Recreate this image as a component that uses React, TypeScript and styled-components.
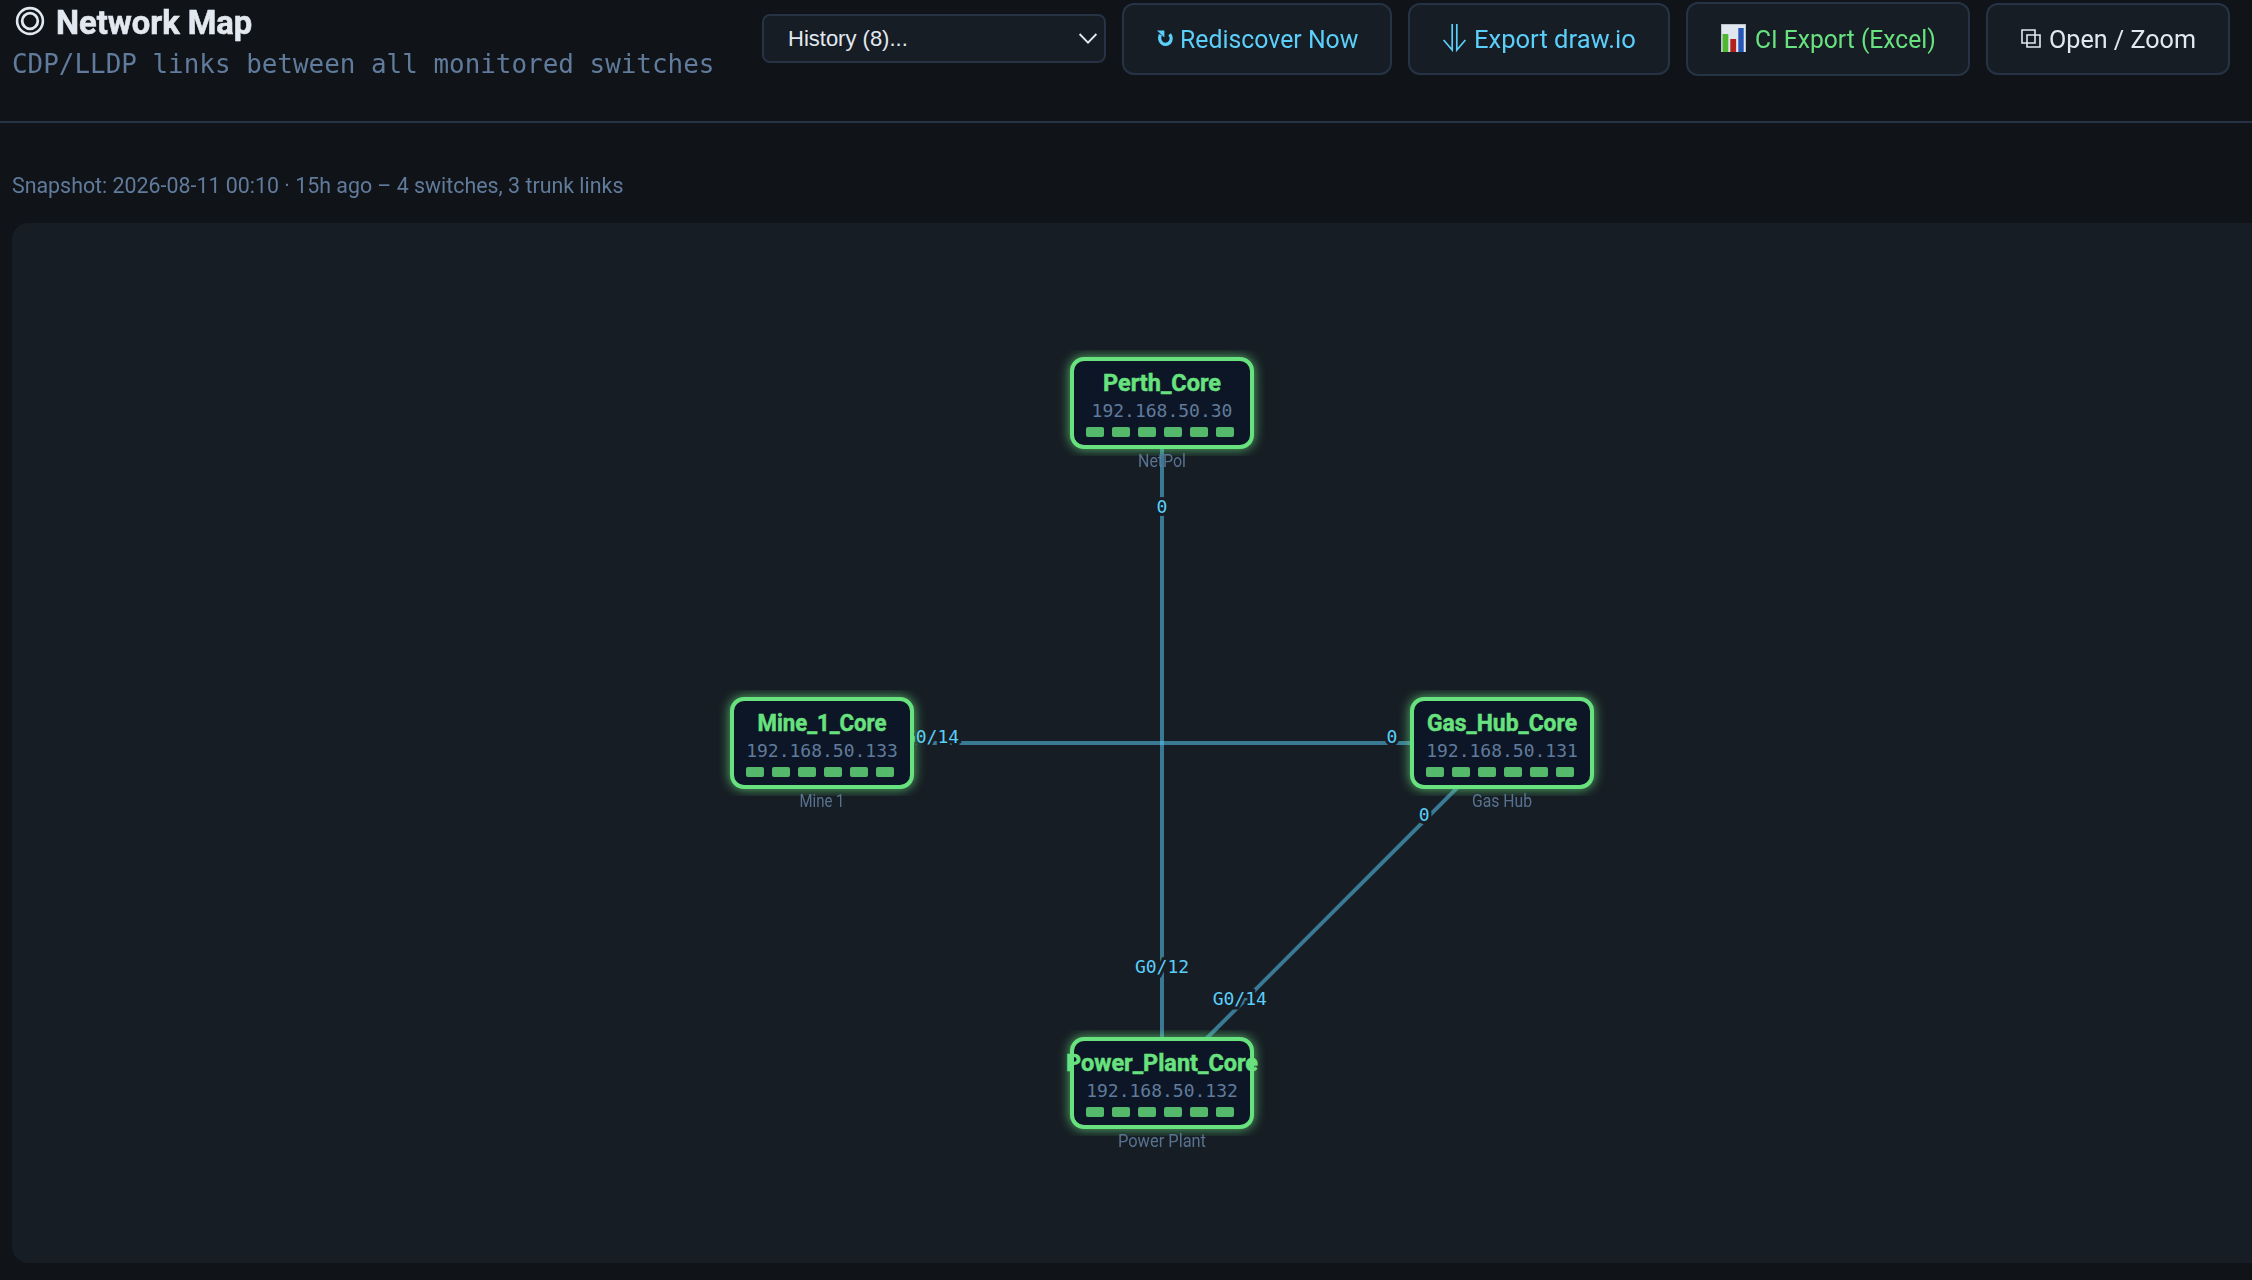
import React, { useLayoutEffect, useRef, useState } from "react";
import styled, { createGlobalStyle } from "styled-components";

const color = {
  bg: "#101318",
  panel: "#161d24",
  border: "#253345",
  text: "#e2e8f0",
  muted: "#607b9b",
  cyan: "#5bcefa",
  green: "#68e27e",
  node: "#0c1525",
};

const GlobalStyle = createGlobalStyle`
  * { box-sizing: border-box; }
  html, body { margin: 0; background: ${color.bg}; overflow: hidden; }
  body { font-family: Roboto, "Liberation Sans", sans-serif; color: ${color.text}; }
`;

const Page = styled.div`
  width: 2252px;
  height: 1280px;
  overflow: hidden;
  display: flex;
  flex-direction: column;
  background: ${color.bg};
`;

const Header = styled.header`
  display: flex;
  justify-content: space-between;
  align-items: flex-start;
  height: 123px;
  flex: none;
  padding: 0 22px 0 12px;
  border-bottom: 2px solid ${color.border};
`;

const Heading = styled.div`
  display: flex;
  flex-direction: column;
`;

const Title = styled.h1`
  margin: 0;
  height: 45px;
  display: flex;
  align-items: center;
  gap: 11px;
  padding-left: 3px;
  font-size: 33px;
  line-height: 43px;
  font-weight: 700;
  -webkit-text-stroke: 0.6px currentColor;
`;

const Subtitle = styled.div`
  height: 38px;
  line-height: 39px;
  font-family: "DejaVu Sans Mono", "Liberation Mono", monospace;
  font-size: 26px;
  color: ${color.muted};
`;

const Toolbar = styled.div`
  display: flex;
  align-items: center;
  gap: 16px;
  height: 78px;
`;

const Select = styled.button`
  width: 344px;
  height: 49px;
  display: flex;
  align-items: center;
  justify-content: space-between;
  margin-bottom: 1px;
  padding: 0 7px 0 24px;
  border: 2px solid ${color.border};
  border-radius: 8px;
  background: ${color.panel};
  color: ${color.text};
  font-family: "Liberation Sans", Arial, sans-serif;
  font-size: 22px;
`;

const Button = styled.button<{ $tone: string; $w: number; $tall?: boolean; $gap?: number }>`
  width: ${(p) => p.$w}px;
  height: ${(p) => (p.$tall ? 74 : 72)}px;
  display: flex;
  align-items: center;
  justify-content: center;
  gap: ${(p) => p.$gap ?? 9}px;
  padding: 0 0 2px;
  border: 2px solid ${color.border};
  border-radius: 12px;
  background: ${color.panel};
  color: ${(p) => p.$tone};
  font-family: Roboto, "Liberation Sans", sans-serif;
  font-size: 26.5px;
  font-weight: 400;
`;

const Icon = styled.svg`
  display: block;
  flex: none;
  overflow: visible;
`;

const RingIcon = styled(Icon)`
  margin-top: -4px;
`;

const Snapshot = styled.div`
  height: 100px;
  flex: none;
  padding: 48px 0 0 12px;
  line-height: 30px;
  font-size: 22px;
  font-weight: 400;
  color: ${color.muted};
`;

const Panel = styled.main`
  flex: none;
  width: 2300px;
  height: 1040px;
  margin-left: 12px;
  border-radius: 16px;
  background: ${color.panel};
`;

const Diagram = styled.svg`
  display: block;
  font-family: Roboto, "Liberation Sans", sans-serif;
`;

const FitBox = styled.span`
  display: inline-block;
  white-space: nowrap;
  text-align: left;
`;

const FitInner = styled.span`
  display: inline-block;
  transform-origin: 0 50%;
`;

function Fit({ width, children }: { width: number; children: string }) {
  const ref = useRef<HTMLSpanElement>(null);
  const [scale, setScale] = useState(1);
  useLayoutEffect(() => {
    if (ref.current) setScale(width / ref.current.offsetWidth);
  }, [width]);
  return (
    <FitBox style={{ width }}>
      <FitInner ref={ref} style={{ transform: `scaleX(${scale})` }}>
        {children}
      </FitInner>
    </FitBox>
  );
}

type Node = { id: string; name: string; nameWidth: number; ip: string; site: string; siteWidth: number; x: number; y: number };

const nodes: Node[] = [
  { id: "perth", name: "Perth_Core", nameWidth: 118, ip: "192.168.50.30", site: "NetPol", siteWidth: 48, x: 1162, y: 403 },
  { id: "gas", name: "Gas_Hub_Core", nameWidth: 150, ip: "192.168.50.131", site: "Gas Hub", siteWidth: 60, x: 1502, y: 743 },
  { id: "power", name: "Power_Plant_Core", nameWidth: 192, ip: "192.168.50.132", site: "Power Plant", siteWidth: 88, x: 1162, y: 1083 },
  { id: "mine", name: "Mine_1_Core", nameWidth: 129, ip: "192.168.50.133", site: "Mine 1", siteWidth: 45, x: 822, y: 743 },
];

const links = [
  { from: "perth", to: "power", a: "0", b: "G0/12" },
  { from: "gas", to: "power", a: "0", b: "G0/14" },
  { from: "mine", to: "gas", a: "G0/14", b: "0" },
];

const LABEL_OFFSET = 110;
const byId = (id: string) => nodes.find((n) => n.id === id)!;

const PortText = styled.text`
  font-family: "DejaVu Sans Mono", "Liberation Mono", monospace;
  font-size: 18px;
  text-anchor: middle;
`;

const PortHalo = styled(PortText)`
  fill: ${color.panel};
  stroke: ${color.panel};
  stroke-width: 6px;
  paint-order: stroke;
`;

const PortLabel = styled(PortHalo)`
  fill: ${color.cyan};
`;

const NameText = styled.text`
  font-size: 24px;
  font-weight: 700;
  text-anchor: middle;
  fill: ${color.green};
  stroke: ${color.green};
  stroke-width: 0.5px;
`;

const IpText = styled.text`
  font-family: "DejaVu Sans Mono", "Liberation Mono", monospace;
  font-size: 18px;
  text-anchor: middle;
  fill: ${color.muted};
`;

const SiteText = styled.text`
  font-size: 17.5px;
  font-weight: 400;
  text-anchor: middle;
  fill: ${color.muted};
  opacity: 0.9;
`;

function Link({ from, to, a, b }: (typeof links)[number]) {
  const p = byId(from);
  const q = byId(to);
  const len = Math.hypot(q.x - p.x, q.y - p.y);
  const dx = ((q.x - p.x) / len) * LABEL_OFFSET;
  const dy = ((q.y - p.y) / len) * LABEL_OFFSET;
  return (
    <g>
      <line x1={p.x} y1={p.y} x2={q.x} y2={q.y} stroke={color.cyan} strokeWidth={4} opacity={0.52} />
      <PortLabel x={p.x + dx} y={p.y + dy}>{a}</PortLabel>
      <PortLabel x={q.x - dx} y={q.y - dy}>{b}</PortLabel>
    </g>
  );
}

function SwitchNode({ node }: { node: Node }) {
  return (
    <g transform={`translate(${node.x} ${node.y})`}>
      <rect x={-90} y={-44} width={180} height={88} rx={12} fill={color.node} stroke={color.green} strokeWidth={4} filter="url(#glow)" />
      <NameText y={-12} textLength={node.nameWidth} lengthAdjust="spacingAndGlyphs">{node.name}</NameText>
      <IpText y={14}>{node.ip}</IpText>
      {[0, 1, 2, 3, 4, 5].map((i) => (
        <rect key={i} x={-76 + i * 26} y={24} width={18} height={10} rx={2} fill={color.green} opacity={0.8} />
      ))}
      <SiteText y={64} textLength={node.siteWidth} lengthAdjust="spacingAndGlyphs">{node.site}</SiteText>
    </g>
  );
}

export default function App() {
  return (
    <Page>
      <GlobalStyle />
      <Header>
        <Heading>
          <Title>
            <RingIcon width="30" height="30" viewBox="0 0 30 30" fill="none" stroke="currentColor">
              <circle cx="15" cy="15" r="12.9" strokeWidth="2.6" />
              <circle cx="15" cy="15" r="7.8" strokeWidth="2.8" />
            </RingIcon>
            <Fit width={196}>Network Map</Fit>
          </Title>
          <Subtitle>
            <Fit width={702}>CDP/LLDP links between all monitored switches</Fit>
          </Subtitle>
        </Heading>
        <Toolbar>
          <Select>
            <span>History (8)...</span>
            <Icon width="18" height="11" viewBox="0 0 18 11" fill="none" stroke="currentColor" strokeWidth="1.9">
              <path d="M.6 1 9 9.6 17.4 1" />
            </Icon>
          </Select>
          <Button $tone={color.cyan} $w={270} $gap={6}>
            <Icon width="17" height="18" viewBox="0 0 17 18" fill="none" stroke="currentColor" strokeWidth="3.2">
              <path d="M3.4 5.6C1.4 10 3.7 15.4 8.4 15.4 13.6 15.4 16 9.6 12.6 5.2" />
              <path d="M0 1.5H7.4V8.6Z" fill="currentColor" stroke="none" />
            </Icon>
            <Fit width={178}>Rediscover Now</Fit>
          </Button>
          <Button $tone={color.cyan} $w={262} $gap={8}>
            <Icon width="23" height="28" viewBox="0 0 23 28" fill="none" stroke="currentColor" strokeWidth="1.7">
              <path d="M9.2 0V26L.6 16M13.8 0V26L22.4 16" />
            </Icon>
            <Fit width={162}>Export draw.io</Fit>
          </Button>
          <Button $tone={color.green} $w={284} $tall $gap={9}>
            <Icon width="25" height="28" viewBox="0 0 25 28">
              <rect width="25" height="28" fill="#b9c3cf" />
              <rect x="1" y="1" width="23" height="27" fill="#e0e7ef" />
              <rect x="1.5" y="10" width="5.8" height="18" fill="#50b733" />
              <rect x="9.3" y="15" width="5.8" height="13" fill="#b2231f" />
              <rect x="17.3" y="4" width="5.4" height="24" fill="#2557b9" />
            </Icon>
            <Fit width={181}>CI Export (Excel)</Fit>
          </Button>
          <Button $tone={color.text} $w={244} $gap={8}>
            <Icon width="20" height="19" viewBox="0 0 20 19" fill="none" stroke="currentColor" strokeWidth="1.6">
              <path d="M1 1H14V14H1ZM6 6H19V18H6Z" />
            </Icon>
            <Fit width={147}>Open / Zoom</Fit>
          </Button>
        </Toolbar>
      </Header>
      <Snapshot>
        <Fit width={611}>Snapshot: 2026-08-11 00:10 · 15h ago – 4 switches, 3 trunk links</Fit>
      </Snapshot>
      <Panel>
        <Diagram width="2240" height="1040" viewBox="12 223 2240 1040">
          <defs>
            <filter id="glow">
              <feDropShadow dx="0" dy="0" stdDeviation="6" floodColor={color.green} floodOpacity="0.8" />
            </filter>
          </defs>
          {links.map((l) => (
            <Link key={l.from + l.to} {...l} />
          ))}
          {nodes.map((n) => (
            <SwitchNode key={n.id} node={n} />
          ))}
        </Diagram>
      </Panel>
    </Page>
  );
}
